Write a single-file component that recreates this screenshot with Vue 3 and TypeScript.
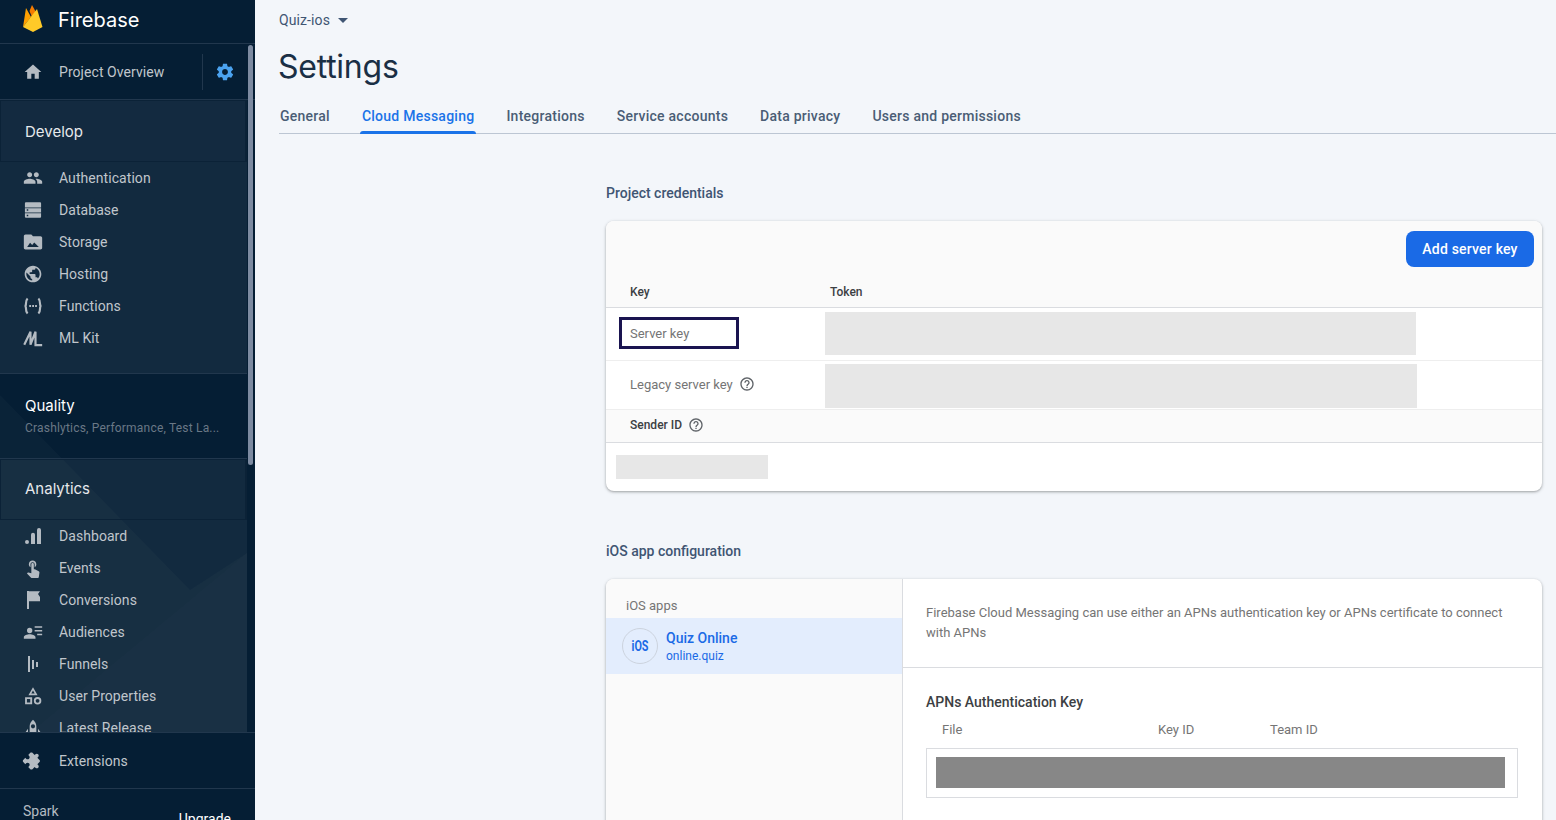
<script setup lang="ts">
interface NavItem {
  label: string
  path: string
  stroke?: boolean
}

const home = 'M10 20v-6h4v6h5v-8h3L12 3 2 12h3v8z'
const gear =
  'M19.43 12.98c.04-.32.07-.64.07-.98s-.03-.66-.07-.98l2.11-1.65c.19-.15.24-.42.12-.64l-2-3.46c-.12-.22-.39-.3-.61-.22l-2.49 1c-.52-.4-1.08-.73-1.69-.98l-.38-2.65C14.46 2.18 14.25 2 14 2h-4c-.25 0-.46.18-.49.42l-.38 2.65c-.61.25-1.17.59-1.69.98l-2.49-1c-.23-.09-.49 0-.61.22l-2 3.46c-.13.22-.07.49.12.64l2.11 1.65c-.04.32-.07.65-.07.98s.03.66.07.98l-2.11 1.65c-.19.15-.24.42-.12.64l2 3.46c.12.22.39.3.61.22l2.49-1c.52.4 1.08.73 1.69.98l.38 2.65c.03.24.24.42.49.42h4c.25 0 .46-.18.49-.42l.38-2.65c.61-.25 1.17-.59 1.69-.98l2.49 1c.23.09.49 0 .61-.22l2-3.46c.12-.22.07-.49-.12-.64l-2.11-1.65zM12 15.5c-1.93 0-3.5-1.57-3.5-3.5s1.57-3.5 3.5-3.5 3.5 1.57 3.5 3.5-1.57 3.5-3.5 3.5z'
const help =
  'M11 18h2v-2h-2v2zm1-16C6.48 2 2 6.48 2 12s4.48 10 10 10 10-4.48 10-10S17.52 2 12 2zm0 18c-4.41 0-8-3.59-8-8s3.59-8 8-8 8 3.59 8 8-3.59 8-8 8zm0-14c-2.21 0-4 1.79-4 4h2c0-1.1.9-2 2-2s2 .9 2 2c0 2-3 1.75-3 5h2c0-2.25 3-2.5 3-5 0-2.21-1.79-4-4-4z'
const puzzle =
  'M20.5 11H19V7c0-1.1-.9-2-2-2h-4V3.5C13 2.12 11.88 1 10.5 1S8 2.12 8 3.5V5H4c-1.1 0-1.99.9-1.99 2v3.8H3.5c1.49 0 2.7 1.21 2.7 2.7s-1.21 2.7-2.7 2.7H2V20c0 1.1.9 2 2 2h3.8v-1.5c0-1.49 1.21-2.7 2.7-2.7 1.49 0 2.7 1.21 2.7 2.7V22H17c1.1 0 2-.9 2-2v-4h1.5c1.38 0 2.5-1.12 2.5-2.5S21.88 11 20.5 11z'

const developItems: NavItem[] = [
  {
    label: 'Authentication',
    path: 'M16 11c1.66 0 2.99-1.34 2.99-3S17.66 5 16 5c-1.66 0-3 1.34-3 3s1.34 3 3 3zm-8 0c1.66 0 2.99-1.34 2.99-3S9.66 5 8 5C6.34 5 5 6.34 5 8s1.34 3 3 3zm0 2c-2.33 0-7 1.17-7 3.5V19h14v-2.5c0-2.33-4.67-3.5-7-3.5zm8 0c-.29 0-.62.02-.97.05 1.16.84 1.97 1.97 1.97 3.45V19h6v-2.5c0-2.33-4.67-3.5-7-3.5z'
  },
  {
    label: 'Database',
    path: 'M3.5 2.8h17A1.2 1.2 0 0 1 21.7 4v5H2.3V4a1.2 1.2 0 0 1 1.2-1.2zM2.3 9.8h19.4V15H2.3zm2.2 1.4v1.8h1.8v-1.8zM2.3 16h19.4v4a1.2 1.2 0 0 1-1.2 1.2h-17A1.2 1.2 0 0 1 2.3 20zm2.2 1.7v1.8h1.8v-1.8z'
  },
  {
    label: 'Storage',
    path: 'M21 5h-9l-2-2H3c-1.1 0-2 .9-2 2v14c0 1.1.9 2 2 2h18c1.1 0 2-.9 2-2V7c0-1.1-.9-2-2-2zM5 18l3.5-5 2.5 2.5 2.5-3 5.5 5.5z'
  },
  {
    label: 'Hosting',
    path: 'M12 2C6.48 2 2 6.48 2 12s4.48 10 10 10 10-4.48 10-10S17.52 2 12 2zm-1 17.93c-3.95-.49-7-3.85-7-7.93 0-.62.08-1.21.21-1.79L9 15v1c0 1.1.9 2 2 2v1.93zm6.9-2.54c-.26-.81-1-1.39-1.9-1.39h-1v-3c0-.55-.45-1-1-1H8v-2h2c.55 0 1-.45 1-1V7h2c1.1 0 2-.9 2-2v-.41c2.93 1.19 5 4.06 5 7.41 0 2.08-.8 3.97-2.1 5.39z'
  },
  {
    label: 'Functions',
    path: 'M5.5 3C3.5 5 3.5 8 3.5 9.5S2.5 12 1.8 12c.7 0 1.7.9 1.7 2.5s0 4.5 2 6.5M18.5 3c2 2 2 5 2 6.5s1 2.500 1.700 2.500c-.7 0-1.700.9-1.700 2.500s0 4.500-2 6.500M7.500 12h2.200M11 12h2.200M14.500 12h2.200',
    stroke: true
  },
  {
    label: 'ML Kit',
    path: 'M1.5 20 9 4.5V20l6-15.500V20.500h8',
    stroke: true
  }
]

const analyticsItems: NavItem[] = [
  {
    label: 'Dashboard',
    path: 'M4.8 16.8a2.4 2.4 0 1 1 0 4.8 2.4 2.4 0 0 1 0-4.8zM9.6 10.4a2.4 2.4 0 0 1 4.8 0v11.2H9.6zM16.8 4.8a2.4 2.4 0 0 1 4.8 0v16.8h-4.8z'
  },
  {
    label: 'Events',
    path: 'M9 11.24V7.5C9 6.12 10.12 5 11.5 5S14 6.12 14 7.5v3.74c1.21-.81 2-2.18 2-3.74C16 5.01 13.99 3 11.5 3S7 5.01 7 7.5c0 1.56.79 2.93 2 3.74zm9.84 4.63l-4.54-2.26c-.17-.07-.35-.11-.54-.11H13v-6c0-.83-.67-1.5-1.5-1.5S10 6.67 10 7.5v10.74l-3.43-.72c-.08-.01-.15-.03-.24-.03-.31 0-.59.13-.79.33l-.79.8 4.94 4.94c.27.27.65.44 1.06.44h6.79c.75 0 1.33-.55 1.44-1.28l.75-5.27c.01-.07.02-.14.02-.2 0-.62-.38-1.16-.91-1.38z'
  },
  {
    label: 'Conversions',
    path: 'M4.8 1.2h2.4v21.6H4.8zM7.2 1.5h13.2L18 4.8l2.4 3.5v5.2H7.2z'
  },
  {
    label: 'Audiences',
    path: 'M8 7a3.2 3.2 0 1 1 0 6.4A3.2 3.2 0 0 1 8 7zM1 20v-1.5C1 16 5 14.8 8 14.8s7 1.2 7 3.7V20zM14 5h9v2h-9zM14 9.5h9v2h-9zM17 14h6v2h-6z'
  },
  {
    label: 'Funnels',
    path: 'M6 2.4h2.4v19.2H6zM10.8 7.2h2.4V18h-2.4zM15.6 9.6H18v6h-2.4z'
  },
  {
    label: 'User Properties',
    path: 'M12 1.5 17.5 11h-11zM12 5.5 10 9h4zM2.5 13.5H11V22H2.5zM4.7 15.7v4h4v-4zM17.5 13.3a4.5 4.5 0 1 1 0 9 4.5 4.5 0 0 1 0-9zm0 2.2a2.3 2.3 0 1 0 0 4.6 2.3 2.3 0 0 0 0-4.6z'
  },
  {
    label: 'Latest Release',
    path: 'M12 2c2.5 2 4 5 4 8v8H8v-8c0-3 1.5-6 4-8zm0 5.5a2.5 2.5 0 1 0 0 5 2.5 2.5 0 0 0 0-5zM6 13v7H3v-3zM18 13v7h3v-3z'
  }
]
</script>

<template>
  <div class="page">
    <aside class="sidebar">
      <header class="brand">
        <svg class="logo" width="22" height="28" viewBox="0 0 22 28" aria-hidden="true">
          <path d="M1 22 4 3l5 9z" fill="#ffa000" />
          <path d="M10 12 7.5 6 10 0l5 9z" fill="#f57c00" />
          <path d="M1 22 15 4l5.5 18L11 27z" fill="#ffca28" />
        </svg>
        <span class="brand-name">Firebase</span>
      </header>

      <div class="scroll-area">
        <svg class="sidebar-bg" width="247" height="689" viewBox="0 44 247 689" aria-hidden="true">
          <polygon points="0,395 190,590 247,553 247,733 0,733" fill="#fff" fill-opacity="0.025" />
          <polygon points="247,553 30,733 247,733" fill="#fff" fill-opacity="0.012" />
        </svg>

        <div class="overview">
          <svg class="nav-icon" viewBox="0 0 24 24" aria-hidden="true"><path :d="home" /></svg>
          <span class="nav-label">Project Overview</span>
          <span class="overview-divider"></span>
          <svg class="gear" viewBox="0 0 24 24" aria-hidden="true"><path :d="gear" /></svg>
        </div>

        <div class="sections">
          <div class="section-head">Develop</div>
          <ul class="nav-list develop-list">
            <li v-for="item in developItems" :key="item.label" class="nav-item">
              <svg
                :class="['nav-icon', { 'is-stroke': item.stroke }]"
                viewBox="0 0 24 24"
                aria-hidden="true"
              ><path :d="item.path" fill-rule="evenodd" /></svg>
              <span class="nav-label">{{ item.label }}</span>
            </li>
          </ul>

          <div class="quality">
            <div class="quality-title">Quality</div>
            <div class="quality-sub">Crashlytics, Performance, Test La...</div>
          </div>

          <div class="section-head analytics-head">Analytics</div>
          <ul class="nav-list">
            <li v-for="item in analyticsItems" :key="item.label" class="nav-item">
              <svg class="nav-icon" viewBox="0 0 24 24" aria-hidden="true">
                <path :d="item.path" fill-rule="evenodd" />
              </svg>
              <span class="nav-label">{{ item.label }}</span>
            </li>
          </ul>
        </div>
        <span class="scrollbar-thumb"></span>
      </div>

      <div class="extensions">
        <svg class="nav-icon puzzle" viewBox="0 0 24 24" aria-hidden="true"><path :d="puzzle" /></svg>
        <span class="nav-label">Extensions</span>
      </div>

      <footer class="plan">
        <span class="plan-name">Spark</span>
        <span class="plan-upgrade">Upgrade</span>
      </footer>
    </aside>

    <main class="main">
      <div class="project">
        <span>Quiz-ios</span>
        <span class="caret"></span>
      </div>
      <h1 class="title">Settings</h1>
      <nav class="tabs">
        <a class="tab">General</a>
        <a class="tab active">Cloud Messaging</a>
        <a class="tab">Integrations</a>
        <a class="tab">Service accounts</a>
        <a class="tab">Data privacy</a>
        <a class="tab">Users and permissions</a>
      </nav>

      <div class="content">
        <h2 class="section-title">Project credentials</h2>
        <section class="card">
          <div class="card-actions">
            <button class="primary-btn">Add server key</button>
          </div>
          <div class="cols-head">
            <span class="col-key">Key</span>
            <span>Token</span>
          </div>
          <div class="key-row server-row">
            <div class="col-key-cell"><span class="focus-box">Server key</span></div>
            <div class="redacted token-one"></div>
          </div>
          <div class="key-row legacy-row">
            <div class="col-key-cell legacy-label">
              <span>Legacy server key</span>
              <svg class="help" viewBox="0 0 24 24" aria-hidden="true"><path :d="help" /></svg>
            </div>
            <div class="redacted token-two"></div>
          </div>
          <div class="sender-head">
            <span>Sender ID</span>
            <svg class="help" viewBox="0 0 24 24" aria-hidden="true"><path :d="help" /></svg>
          </div>
          <div class="sender-row">
            <div class="redacted sender-value"></div>
          </div>
        </section>

        <h2 class="section-title ios-title">iOS app configuration</h2>
        <section class="card ios-card">
          <div class="apps">
            <div class="apps-label">iOS apps</div>
            <div class="app-row">
              <span class="app-badge"><span class="app-badge-text">iOS</span></span>
              <div class="app-text">
                <div class="app-name">Quiz Online</div>
                <div class="app-id">online.quiz</div>
              </div>
            </div>
          </div>
          <div class="apns">
            <p class="apns-intro">
              Firebase Cloud Messaging can use either an APNs authentication key or APNs certificate to connect
              with APNs
            </p>
            <div class="apns-body">
              <h3 class="apns-title">APNs Authentication Key</h3>
              <div class="apns-cols">
                <span class="col-file">File</span>
                <span class="col-keyid">Key ID</span>
                <span>Team ID</span>
              </div>
              <div class="apns-box"><div class="apns-redacted"></div></div>
            </div>
          </div>
        </section>
      </div>
    </main>
  </div>
</template>

<style>
html,
body {
  margin: 0;
  overflow: hidden;
}
</style>

<style scoped>
.page {
  display: flex;
  height: 820px;
  overflow: hidden;
  background: #f3f6fa;
  font-family: Roboto, "Liberation Sans", sans-serif;
}

.sidebar {
  display: flex;
  flex-direction: column;
  flex: none;
  width: 255px;
  height: 820px;
  overflow: hidden;
  background: #051e34;
}

.sidebar-bg {
  position: absolute;
  top: 0;
  left: 0;
  pointer-events: none;
}

.brand {
  display: flex;
  align-items: center;
  flex: none;
  height: 37px;
  padding: 0 0 6px 22px;
  border-bottom: 1px solid #21374d;
}

.logo {
  flex: none;
}

.brand-name {
  margin: 2px 0 0 14px;
  font-family: Inter, sans-serif;
  font-size: 20px;
  color: #fff;
}

.overview {
  position: relative;
  display: flex;
  align-items: center;
  height: 55px;
  padding-left: 23px;
  border-bottom: 1px solid #21374d;
}

.nav-icon {
  flex: none;
  width: 20px;
  height: 20px;
  fill: #b4bbc2;
}

.nav-icon.is-stroke {
  fill: none;
  stroke: #b4bbc2;
  stroke-width: 2.6;
}

.nav-label {
  margin-left: 16px;
  font-size: 14px;
  font-weight: 400;
  letter-spacing: 0.06px;
  color: #c0c6cc;
  white-space: nowrap;
}

.overview-divider {
  width: 1px;
  height: 36px;
  margin-left: 38px;
  background: #21374d;
}

.gear {
  width: 20px;
  height: 20px;
  margin-left: 12px;
  fill: #4ba3f0;
}

.scroll-area {
  position: relative;
  flex: 1;
  min-height: 0;
  overflow: hidden;
}

.sections {
  position: relative;
  width: 247px;
}

.section-head {
  display: flex;
  align-items: center;
  height: 62px;
  padding-left: 24px;
  border: 1px solid #0b2237;
  border-right-width: 2px;
  background: #132a40;
  font-family: Inter, sans-serif;
  font-size: 15px;
  color: #e6e9ec;
  box-sizing: border-box;
}

.analytics-head {
  height: 61px;
  padding-bottom: 2px;
  background: rgba(255, 255, 255, 0.055);
}

.nav-list {
  margin: 0;
  padding: 0;
  list-style: none;
  background: rgba(255, 255, 255, 0.055);
}

.develop-list {
  height: 212px;
  border-bottom: 1px solid #21374d;
  box-sizing: border-box;
}

.nav-item {
  display: flex;
  align-items: center;
  height: 32px;
  padding-left: 23px;
}

.quality {
  height: 85px;
  padding: 22px 0 0 25px;
  box-sizing: border-box;
  border-bottom: 1px solid #21374d;
}

.quality-title {
  font-family: Inter, sans-serif;
  font-size: 15px;
  line-height: 20px;
  color: #fff;
}

.quality-sub {
  margin-top: 4px;
  font-size: 12px;
  line-height: 16px;
  letter-spacing: 0.2px;
  color: #6a7886;
  white-space: nowrap;
}

.scrollbar-thumb {
  position: absolute;
  top: 1px;
  left: 248px;
  width: 5px;
  height: 420px;
  border-radius: 3px;
  background: #7d8ba1;
}

.extensions {
  display: flex;
  align-items: center;
  flex: none;
  height: 57px;
  padding-left: 23px;
  box-sizing: border-box;
  border-top: 1px solid #21374d;
  border-bottom: 1px solid #21374d;
}

.puzzle {
  transform: rotate(45deg) scale(0.92);
}

.plan {
  display: flex;
  justify-content: space-between;
  flex: none;
  height: 31px;
  padding: 14px 24px 0 23px;
  box-sizing: border-box;
  font-size: 14px;
}

.plan-name {
  color: #b4bbc2;
}

.plan-upgrade {
  margin-top: 8px;
  color: #fff;
}

.main {
  flex: 1;
  min-width: 0;
  padding: 12px 0 0 24px;
  overflow: hidden;
}

.project {
  display: flex;
  align-items: center;
  height: 16px;
  font-size: 14px;
  letter-spacing: 0.1px;
  color: #3f5573;
}

.caret {
  width: 0;
  height: 0;
  margin-left: 8px;
  border: 5px solid transparent;
  border-top-color: #3f5573;
  border-bottom: 0;
}

.title {
  margin: 15px 0 0 -1px;
  font-family: Inter, sans-serif;
  font-size: 32px;
  line-height: 48px;
  font-weight: 400;
  letter-spacing: -0.25px;
  color: #1a2f45;
}

.tabs {
  display: flex;
  gap: 32px;
  height: 32px;
  padding: 4px 1px 0;
  box-sizing: border-box;
  margin-top: 11px;
  border-bottom: 1px solid #bcc6d3;
}

.tab {
  position: relative;
  font-size: 14px;
  line-height: 20px;
  font-weight: 500;
  letter-spacing: 0.25px;
  color: #4a5d75;
}

.tab.active {
  color: #1a73e8;
}

.tab.active::after {
  content: "";
  position: absolute;
  left: -2px;
  right: -2px;
  bottom: -1px;
  height: 3px;
  border-radius: 3px 3px 0 0;
  background: #1a73e8;
}

.content {
  width: 936px;
  margin-left: 327px;
}

.section-title {
  margin: 49px 0 0;
  font-size: 14px;
  line-height: 20px;
  font-weight: 500;
  color: #3f5573;
}

.card {
  margin-top: 18px;
  border-radius: 8px;
  background: #fff;
  box-shadow: 0 1px 2px rgba(60, 64, 67, 0.3), 0 1px 3px 1px rgba(60, 64, 67, 0.15);
  overflow: hidden;
}

.card-actions {
  display: flex;
  justify-content: flex-end;
  height: 56px;
  padding: 10px 8px 0 0;
  box-sizing: border-box;
  background: #fafafa;
}

.primary-btn {
  width: 128px;
  height: 36px;
  border: none;
  border-radius: 8px;
  background: #1a6ae6;
  color: #fff;
  font-family: inherit;
  font-size: 14px;
  font-weight: 500;
  letter-spacing: 0.2px;
}

.cols-head {
  display: flex;
  align-items: center;
  height: 30px;
  padding-left: 24px;
  background: #fafafa;
  border-bottom: 1px solid #dadce0;
  font-size: 12px;
  font-weight: 500;
  color: #3c4043;
}

.col-key {
  width: 200px;
}

.key-row {
  display: flex;
  border-bottom: 1px solid #eeeeee;
  box-sizing: border-box;
}

.server-row {
  height: 53px;
  padding-top: 4px;
}

.legacy-row {
  height: 49px;
  padding-top: 3px;
}

.col-key-cell {
  display: flex;
  align-items: center;
  flex: none;
  width: 219px;
  padding-left: 14px;
  box-sizing: border-box;
  font-size: 13px;
  color: #757575;
}

.focus-box {
  display: flex;
  align-items: center;
  width: 120px;
  height: 32px;
  padding: 1px 0 0 8px;
  border: 3px solid #1a1450;
  box-sizing: border-box;
  margin: 0 0 7px -1px;
}

.legacy-label {
  padding: 0 0 5px 24px;
}

.redacted {
  background: #e7e7e7;
}

.token-one {
  width: 591px;
  height: 43px;
}

.token-two {
  width: 592px;
  height: 44px;
}

.help {
  width: 16px;
  height: 16px;
  margin-left: 6px;
  fill: #5f6368;
}

.sender-head {
  display: flex;
  align-items: center;
  height: 33px;
  padding: 0 0 2px 24px;
  border-bottom: 1px solid #dadce0;
  box-sizing: border-box;
  background: #fafafa;
  font-size: 12px;
  font-weight: 500;
  color: #3c4043;
}

.sender-row {
  height: 48px;
  padding: 12px 0 0 10px;
  box-sizing: border-box;
}

.sender-value {
  width: 152px;
  height: 24px;
}

.section-title.ios-title {
  margin-top: 50px;
}

.ios-card {
  display: flex;
  height: 400px;
}

.apps {
  flex: none;
  width: 297px;
  box-sizing: border-box;
  background: #fafafa;
  border-right: 1px solid #dadce0;
}

.apps-label {
  padding: 19px 0 0 20px;
  height: 39px;
  box-sizing: border-box;
  font-size: 13px;
  line-height: 16px;
  color: #757575;
}

.app-row {
  display: flex;
  align-items: center;
  height: 56px;
  padding-left: 16px;
  box-sizing: border-box;
  background: #e3edfd;
}

.app-badge {
  display: flex;
  align-items: center;
  justify-content: center;
  flex: none;
  width: 36px;
  height: 36px;
  border: 1px solid #ccd3de;
  border-radius: 50%;
  box-sizing: border-box;
}

.app-badge-text {
  font-size: 14px;
  font-weight: 700;
  color: #1a6ae6;
  transform: scaleX(0.77);
}

.app-text {
  margin-left: 8px;
}

.app-name {
  font-size: 14px;
  line-height: 20px;
  font-weight: 500;
  color: #1a6ae6;
}

.app-id {
  font-size: 12px;
  line-height: 16px;
  color: #1a6ae6;
}

.apns {
  flex: 1;
  min-width: 0;
}

.apns-intro {
  margin: 0;
  height: 89px;
  padding: 24px 24px 0 23px;
  box-sizing: border-box;
  border-bottom: 1px solid #dadce0;
  font-size: 13px;
  line-height: 20px;
  color: #757575;
}

.apns-body {
  padding: 24px 24px 0 23px;
}

.apns-title {
  margin: 0;
  font-size: 14px;
  line-height: 20px;
  font-weight: 500;
  color: #3c4043;
}

.apns-cols {
  display: flex;
  margin-top: 10px;
  padding-left: 16px;
  font-size: 13px;
  line-height: 16px;
  color: #757575;
}

.col-file {
  width: 216px;
}

.col-keyid {
  width: 112px;
}

.apns-box {
  height: 50px;
  margin-top: 10px;
  padding: 8px 12px 0 9px;
  border: 1px solid #dadce0;
  box-sizing: border-box;
}

.apns-redacted {
  height: 31px;
  background: #878787;
}
</style>
